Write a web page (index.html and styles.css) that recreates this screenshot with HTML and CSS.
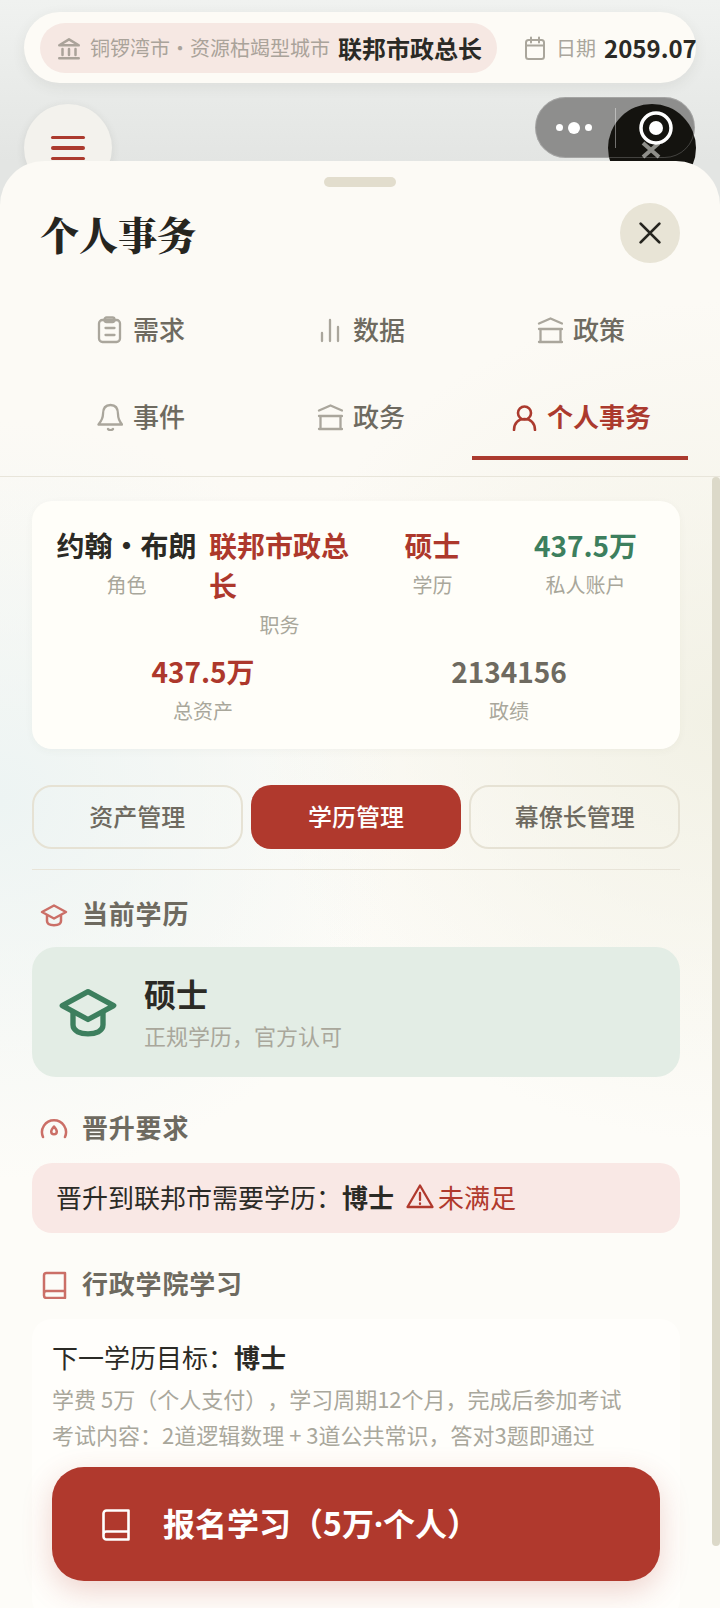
FILE: index.html
```html
<!DOCTYPE html>
<html lang="zh">
  <head>
    <meta charset="utf-8">
    <title>个人事务</title>
    <link rel="stylesheet" href="styles.css">
  </head>
  <body>
    <div class="topbar">
      <div class="city-pill">
        <svg class="icon-city" viewBox="0 0 24 24"><path d="M3 9.500 12 4l9 5.500zM6 13v5.500M12 13v5.500M18 13v5.500M3 21.500h18"/></svg>
        <span class="city-name">铜锣湾市・资源枯竭型城市</span>
        <span class="city-role">联邦市政总长</span>
      </div>
      <div class="date-box">
        <svg class="icon-date" viewBox="0 0 24 24"><rect x="3" y="4" width="18" height="19" rx="2.500"/><path d="M3 9.500h18M8 1.500v5M16 1.500v5"/></svg>
        <span class="date-label">日期</span>
        <span class="date-value">2059.07</span>
      </div>
    </div>

    <div class="menu-btn">
      <span></span><span></span><span></span>
    </div>

    <div class="capsule"></div>
    <div class="float-badge">
      <svg viewBox="0 0 88 88">
        <path d="M35 39 51 53M51 39 35 53" stroke="#8f8f8a" stroke-width="4" stroke-linecap="butt"/>
        <circle cx="48" cy="24" r="15" fill="#14130f" stroke="#fff" stroke-width="3.500"/>
        <circle cx="48" cy="24" r="7" fill="#fff" stroke="none"/>
      </svg>
    </div>
    <div class="capsule-top">
      <div class="capsule-dots"><i></i><b></b><i></i></div>
      <div class="capsule-line"></div>
    </div>

    <div class="sheet">
      <div class="handle"></div>
      <div class="sheet-head">
        <h1>个人事务</h1>
        <div class="close-btn">
          <svg viewBox="0 0 24 24"><path d="M4.500 4.500l15 15M19.500 4.500l-15 15"/></svg>
        </div>
      </div>

      <div class="tabs">
        <div class="tab">
          <svg class="tab-icon" viewBox="0 0 28 28"><rect x="4" y="4" width="21" height="22" rx="3.500"/><rect x="9.500" y="1.500" width="10" height="4.500" rx="2"/><path d="M10.500 12h9M10.500 19h9"/></svg>
          需求
        </div>
        <div class="tab">
          <svg class="tab-icon" viewBox="0 0 28 28"><path d="M7 17v8M15 4v21M23 11v14"/></svg>
          数据
        </div>
        <div class="tab">
          <svg class="tab-icon" viewBox="0 0 28 28"><path d="M4 7.500 15.500 2.500 27 7.500M4 13h23M5.500 13v13M25.500 13v13M4 26h23"/></svg>
          政策
        </div>
        <div class="tab">
          <svg class="tab-icon" viewBox="0 0 28 28"><path d="M15.500 2C10 2 8 6 8 11c0 5-2.500 8-4.500 10.500H27C25 19 23 16 23 11c0-5-2-9-7.500-9zM13 26c1 1.500 4 1.500 5 0"/></svg>
          事件
        </div>
        <div class="tab">
          <svg class="tab-icon" viewBox="0 0 28 28"><path d="M4 7.500 15.500 2.500 27 7.500M4 13h23M5.500 13v13M25.500 13v13M4 26h23"/></svg>
          政务
        </div>
        <div class="tab tab-active">
          <svg class="tab-icon" viewBox="0 0 28 28"><circle cx="15.500" cy="10" r="6.500"/><path d="M5 27c0-7 4.500-11 10.500-11S26 20 26 27"/></svg>
          个人事务
        </div>
      </div>

      <div class="scroll">
        <div class="scroll-thumb"></div>

        <div class="stat-card">
          <div class="stat-row-four">
            <div class="stat">
              <div class="stat-value">约翰・布朗</div>
              <div class="stat-label">角色</div>
            </div>
            <div class="stat">
              <div class="stat-value red">联邦市政总长</div>
              <div class="stat-label">职务</div>
            </div>
            <div class="stat">
              <div class="stat-value red">硕士</div>
              <div class="stat-label">学历</div>
            </div>
            <div class="stat">
              <div class="stat-value green">437.5万</div>
              <div class="stat-label">私人账户</div>
            </div>
          </div>
          <div class="stat-row-two">
            <div class="stat">
              <div class="stat-value red">437.5万</div>
              <div class="stat-label">总资产</div>
            </div>
            <div class="stat">
              <div class="stat-value muted">2134156</div>
              <div class="stat-label">政绩</div>
            </div>
          </div>
        </div>

        <div class="sub-tabs">
          <div class="sub-tab">资产管理</div>
          <div class="sub-tab sub-tab-active">学历管理</div>
          <div class="sub-tab">幕僚长管理</div>
        </div>
        <div class="divider"></div>

        <div class="section-title first">
          <svg class="section-icon" viewBox="0 0 28 28"><path d="M14 4.500 26 11 14 17.500 2 11z"/><path d="M7 14.500V20c0 3 3.500 4.200 7 4.200s7-1.200 7-4.200v-5.500"/></svg>
          当前学历
        </div>
        <div class="degree-card">
          <svg class="degree-icon" viewBox="0 0 28 28"><path d="M14 4.500 26 11 14 17.500 2 11z"/><path d="M7 14.500V20c0 3 3.500 4.200 7 4.200s7-1.200 7-4.200v-5.500"/></svg>
          <div class="degree-text">
            <div class="degree-name">硕士</div>
            <div class="degree-note">正规学历，官方认可</div>
          </div>
        </div>

        <div class="section-title">
          <svg class="section-icon" viewBox="0 0 28 28"><path d="M3 22A12 12 0 1 1 25 22"/><path d="M14 11.500c2 2.500 2.800 3.500 2.800 5a2.800 2.800 0 0 1-5.600 0c0-1.500.8-2.500 2.800-5z"/></svg>
          晋升要求
        </div>
        <div class="require-card">
          晋升到联邦市需要学历：<b>博士</b>
          <span class="unmet">
            <svg class="warn-icon" viewBox="0 0 28 28"><path d="M14 3.500 26.500 25h-25zM14 11v7M14 21.500v.5"/></svg>
            未满足
          </span>
        </div>

        <div class="section-title">
          <svg class="section-icon" viewBox="0 0 28 28"><path d="M4 22V4.500A2.500 2.500 0 0 1 6.500 2H25v25H6.500A2.500 2.500 0 0 1 4 24.500v-2A2.500 2.500 0 0 1 6.500 20H25"/></svg>
          行政学院学习
        </div>
        <div class="study-card">
          <div class="study-goal">下一学历目标：<b>博士</b></div>
          <div class="study-note">学费 5万（个人支付），学习周期12个月，完成后参加考试</div>
          <div class="study-note">考试内容：2道逻辑数理 + 3道公共常识，答对3题即通过</div>
        </div>
      </div>

      <div class="enroll-btn">
        <svg class="enroll-icon" viewBox="0 0 28 32"><path d="M1.500 25V4.500A3 3 0 0 1 4.500 1.500h22v29h-22a3 3 0 0 1-3-3V25a3 3 0 0 1 3-2.500h22"/></svg>
        <span class="enroll-text">报名学习（5万<span class="latin-dot">·</span>个人）</span>
      </div>
    </div>
  </body>
</html>
```

FILE: styles.css
```css
* {
  box-sizing: border-box;
}
html,
body {
  margin: 0;
  height: 100%;
}
body {
  position: relative;
  height: 1608px;
  overflow: hidden;
  padding-top: 12px;
  background: linear-gradient(180deg, #f0f2f0 0%, #e3e5e3 161px, #e3e5e3 100%);
  font-family: "Noto Sans CJK SC", "Noto Sans", sans-serif;
  color: #2b2a25;
  text-spacing-trim: space-all;
}
svg {
  display: block;
  fill: none;
  stroke: currentColor;
  stroke-width: 2;
  stroke-linecap: round;
  stroke-linejoin: round;
  flex: none;
}

/* top status bar */
.topbar {
  display: flex;
  align-items: center;
  width: 672px;
  height: 71px;
  margin-left: 24px;
  padding-left: 16px;
  border-radius: 36px;
  background: #fdfbf6;
  box-shadow: 0 4px 14px rgba(60, 60, 50, 0.08);
  white-space: nowrap;
}
.city-pill {
  flex: none;
  display: flex;
  align-items: center;
  width: 457px;
  height: 50px;
  padding-left: 16px;
  border-radius: 25px;
  background: #f6e8e3;
}
.icon-city {
  width: 26px;
  height: 26px;
  stroke-width: 2.300;
  color: #aaa39a;
}
.city-name {
  margin-left: 8px;
  font-size: 20px;
  color: #aaa39a;
}
.city-role {
  margin-left: 8px;
  font-size: 24px;
  font-weight: 700;
}
.date-box {
  flex: none;
  display: flex;
  align-items: center;
  margin-left: 26px;
}
.icon-date {
  width: 24px;
  height: 26px;
  color: #aaa69c;
}
.date-label {
  margin-left: 9px;
  font-size: 20px;
  color: #aaa69c;
}
.date-value {
  margin-left: 8px;
  font-size: 24px;
  font-weight: 700;
}

/* floating buttons behind the sheet */
.menu-btn {
  position: absolute;
  left: 24px;
  top: 104px;
  width: 88px;
  height: 88px;
  display: flex;
  flex-direction: column;
  align-items: center;
  justify-content: center;
  gap: 7px;
  border-radius: 50%;
  background: #f3f2ed;
  box-shadow: 0 2px 8px rgba(60, 60, 50, 0.1);
}
.menu-btn span {
  width: 34px;
  height: 3.500px;
  border-radius: 2px;
  background: #ab3a2e;
}
.float-badge {
  position: absolute;
  left: 608px;
  top: 104px;
  width: 88px;
  height: 88px;
  border-radius: 50%;
  background: #14130f;
}
.capsule,
.capsule-top {
  position: absolute;
  left: 535px;
  top: 97px;
  width: 160px;
  height: 61px;
  border-radius: 31px;
}
.capsule {
  background: #8e8e8d;
}
.capsule-top {
  border: 1px solid rgba(255, 255, 255, 0.2);
}
.capsule-dots {
  position: absolute;
  left: 20px;
  top: 0;
  height: 59px;
  display: flex;
  align-items: center;
  gap: 5px;
}
.capsule-dots i {
  width: 7px;
  height: 7px;
  border-radius: 50%;
  background: #fff;
}
.capsule-dots b {
  width: 12px;
  height: 12px;
  border-radius: 50%;
  background: #fff;
}
.capsule-line {
  position: absolute;
  left: 79px;
  top: 10px;
  width: 1px;
  height: 40px;
  background: rgba(255, 255, 255, 0.4);
}

/* sheet */
.sheet {
  position: absolute;
  left: 0;
  right: 0;
  top: 161px;
  bottom: 0;
  display: flex;
  flex-direction: column;
  border-radius: 44px 44px 0 0;
  background:
    radial-gradient(400px 380px at 0 640px, #edf4f3 0%, rgba(237, 244, 243, 0) 100%),
    radial-gradient(460px 420px at 720px 560px, #f2f1e5 0%, rgba(242, 241, 229, 0) 100%),
    linear-gradient(180deg, #fcfaf5 0%, #fcfaf5 300px, #fdfcf8 900px);
  overflow: hidden;
}
.handle {
  width: 72px;
  height: 10px;
  margin: 16px auto 0;
  border-radius: 5px;
  background: #e2ddcd;
}
.sheet-head {
  display: flex;
  align-items: center;
  justify-content: space-between;
  height: 60px;
  margin-top: 16px;
  padding: 0 40px;
}
.sheet-head h1 {
  margin: 0;
  font-family: "Noto Serif CJK SC", "Noto Sans CJK SC", serif;
  font-size: 39px;
  font-weight: 900;
  color: #26251f;
}
.close-btn {
  width: 60px;
  height: 60px;
  display: flex;
  align-items: center;
  justify-content: center;
  border-radius: 50%;
  background: #e8e4d6;
  color: #26251f;
}
.close-btn svg {
  width: 30px;
  height: 30px;
  stroke-width: 2.200;
}

/* tabs */
.tabs {
  display: grid;
  grid-template-columns: repeat(3, 1fr);
  column-gap: 4px;
  row-gap: 1px;
  margin-top: 24px;
  padding: 0 32px 16px;
  border-bottom: 1px solid #e8e5da;
}
.tab {
  display: flex;
  align-items: center;
  justify-content: center;
  gap: 10px;
  height: 86px;
  padding-bottom: 3px;
  font-size: 26px;
  font-weight: 500;
  color: #6e6a60;
}
.tab-icon {
  width: 28px;
  height: 28px;
  margin-bottom: -3px;
  stroke-width: 2.300;
  color: #aaa69c;
}
.tab-active {
  color: #ab3a2e;
  font-weight: 700;
  box-shadow: inset 0 -4px 0 #ab3a2e;
}
.tab-active .tab-icon {
  stroke-width: 2.600;
  color: #ab3a2e;
}

/* scrolling content */
.scroll {
  position: relative;
  flex: 1;
  overflow: hidden;
  padding: 24px 40px 0 32px;
}
.scroll-thumb {
  position: absolute;
  right: 0;
  top: 0;
  width: 8px;
  height: 1069px;
  border-radius: 4px;
  background: #dcd9c9;
}
.stat-card {
  width: 648px;
  padding: 24px 24px 24px;
  border-radius: 20px;
  background: #fffef9;
  box-shadow: 0 2px 8px rgba(80, 80, 60, 0.04);
}
.stat-row-four {
  display: grid;
  grid-template-columns: repeat(4, 1fr);
  gap: 12px;
}
.stat-row-two {
  display: grid;
  grid-template-columns: repeat(2, 1fr);
  gap: 12px;
  margin-top: 12px;
}
.stat {
  min-width: 0;
  text-align: center;
}
.stat-value {
  font-size: 28px;
  line-height: 40px;
  font-weight: 700;
  text-align: center;
}
.stat-row-four .stat:nth-child(2) .stat-value {
  text-align: left;
}
.stat-label {
  margin-top: 6px;
  font-size: 20px;
  line-height: 28px;
  color: #a9a79b;
}
.red {
  color: #ad382c;
}
.green {
  color: #3d7f5e;
}
.muted {
  color: #6e6a60;
}
.sub-tabs {
  display: grid;
  grid-template-columns: repeat(3, 1fr);
  gap: 8px;
  width: 648px;
  margin-top: 36px;
}
.sub-tab {
  display: flex;
  align-items: center;
  justify-content: center;
  height: 64px;
  padding-bottom: 4px;
  border: 2px solid #e6e2d4;
  border-radius: 20px;
  font-size: 24px;
  font-weight: 500;
  color: #6e6a60;
}
.sub-tab-active {
  border: none;
  background: #b0392d;
  color: #fff;
}
.divider {
  width: 648px;
  height: 1px;
  margin-top: 20px;
  background: #e8e4d8;
}
.section-title {
  display: flex;
  align-items: center;
  gap: 14px;
  height: 36px;
  margin-top: 31px;
  margin-bottom: 19px;
  padding-left: 8px;
  font-size: 26px;
  font-weight: 700;
  letter-spacing: 0.8px;
  color: #6e6a60;
}
.section-title.first {
  margin-top: 24px;
  margin-bottom: 17px;
}
.section-icon {
  width: 28px;
  height: 28px;
  margin-top: 6px;
  stroke-width: 2.500;
  color: #cb6f67;
}
.degree-card {
  display: flex;
  align-items: center;
  gap: 26px;
  width: 648px;
  height: 130px;
  padding-left: 26px;
  border-radius: 24px;
  background: #e3ede5;
}
.degree-icon {
  width: 60px;
  height: 60px;
  stroke-width: 2.500;
  color: #3d7f5e;
}
.degree-text {
  padding-bottom: 4px;
}
.degree-name {
  font-size: 32px;
  line-height: 46px;
  font-weight: 700;
}
.degree-note {
  margin-top: 3px;
  font-size: 22px;
  line-height: 32px;
  color: #a9a79b;
}
.require-card {
  display: flex;
  align-items: center;
  width: 648px;
  height: 70px;
  padding: 0 0 4px 24px;
  border-radius: 20px;
  background: #f9e8e5;
  font-size: 26px;
}
.unmet {
  display: flex;
  align-items: center;
  gap: 4px;
  margin-left: 12px;
  color: #b0392d;
}
.warn-icon {
  width: 28px;
  height: 28px;
  stroke-width: 2.300;
}
.study-card {
  width: 648px;
  height: 300px;
  padding: 19px 20px;
  border-radius: 20px;
  background: #fffefb;
}
.study-goal {
  font-size: 26px;
  line-height: 38px;
  margin-bottom: 4px;
}
.study-note {
  font-size: 22px;
  line-height: 36px;
  color: #a9a79b;
  white-space: nowrap;
}

/* bottom action */
.enroll-btn {
  position: absolute;
  left: 52px;
  top: 1306px;
  display: flex;
  align-items: center;
  gap: 33px;
  width: 608px;
  height: 114px;
  padding-left: 50px;
  border-radius: 32px;
  background: #b0392d;
  box-shadow: 0 10px 30px rgba(176, 57, 45, 0.22);
  font-size: 32px;
  font-weight: 700;
  color: #fff;
}
.enroll-text {
  padding-bottom: 4px;
}
.enroll-icon {
  width: 28px;
  height: 32px;
  margin-top: 1px;
  stroke-width: 2.600;
}
.latin-dot {
  font-family: "Noto Sans", sans-serif;
}
```
